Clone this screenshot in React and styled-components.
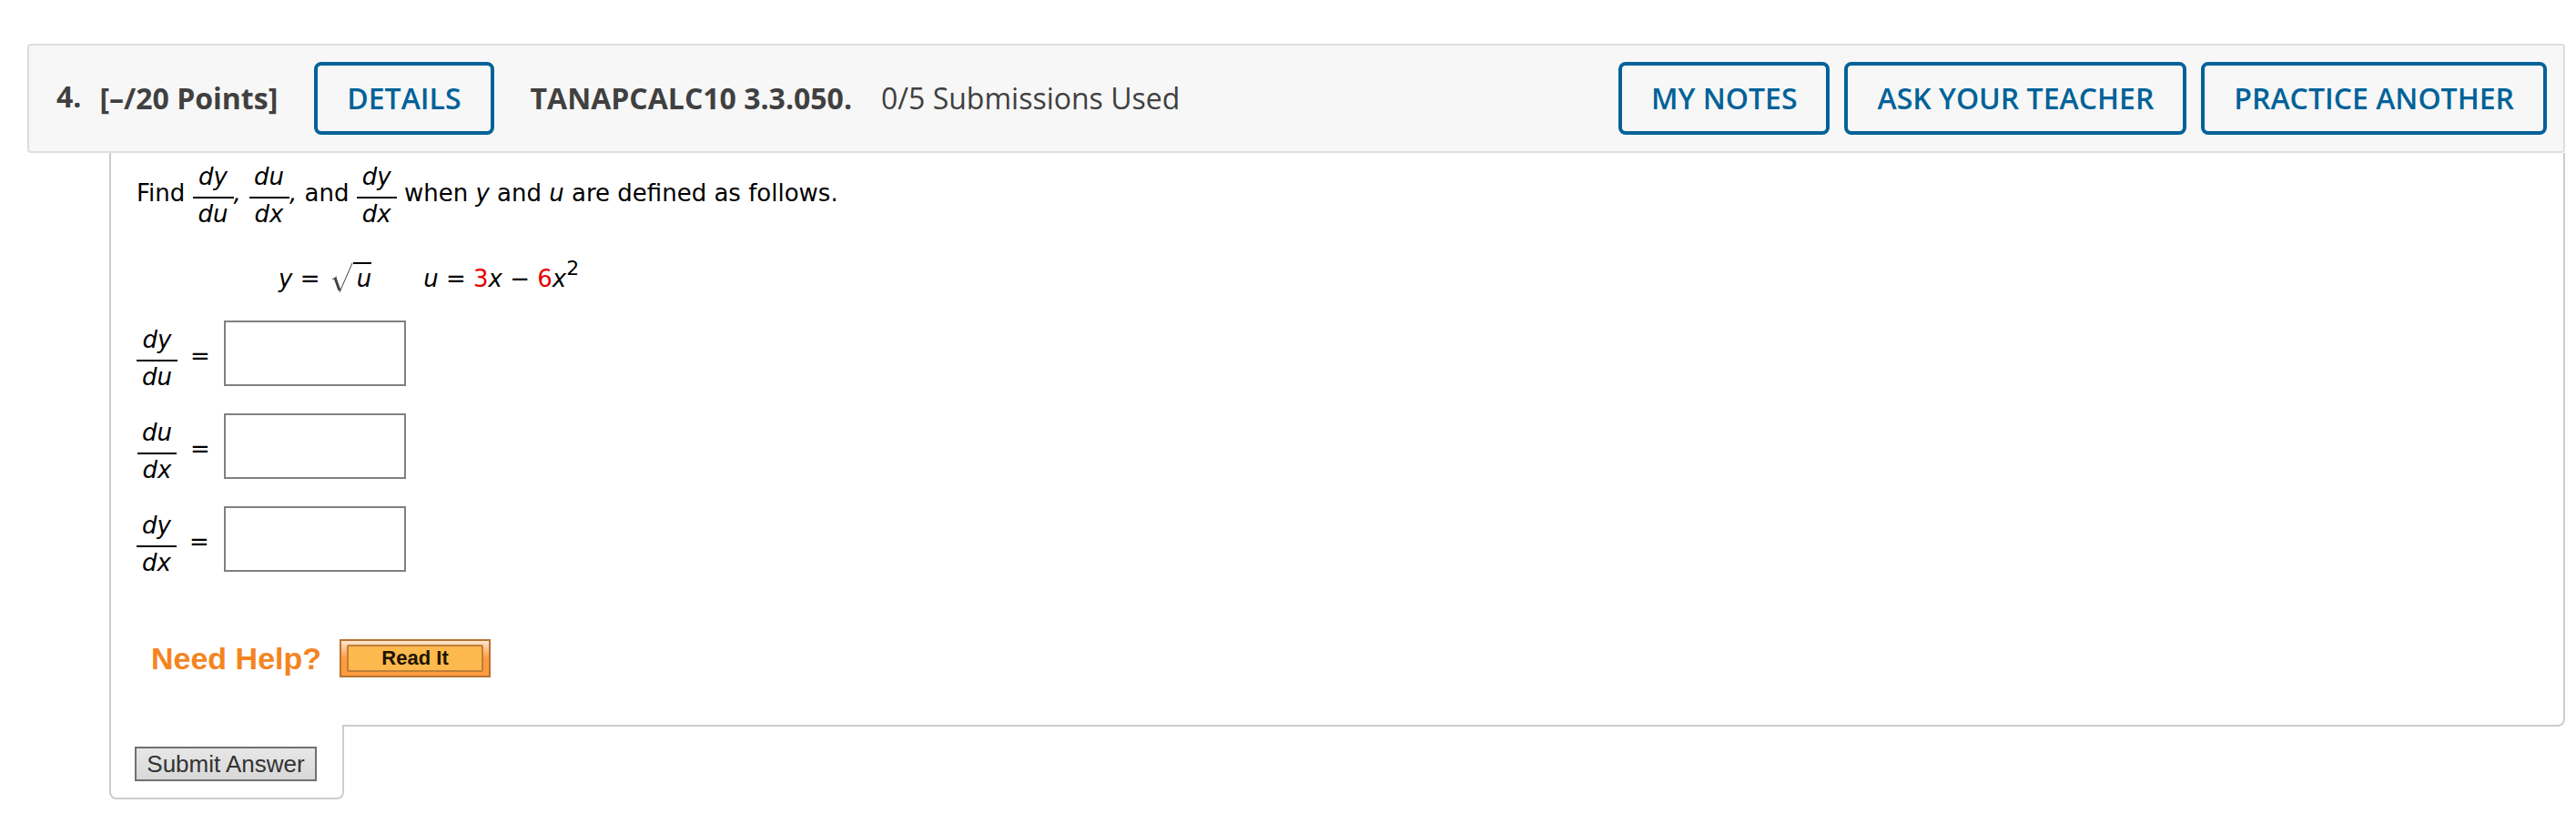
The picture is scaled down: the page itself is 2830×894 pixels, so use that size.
import styled, { createGlobalStyle } from "styled-components";

const GlobalStyle = createGlobalStyle`
    body {
        margin: 0;
        background-color: #fff;
        color: #000;
        font-family: Verdana, "DejaVu Sans", sans-serif;
        font-size: 26px;
        line-height: 30px;
    }
    * {
        box-sizing: border-box;
    }
`;

const Page = styled.main`
    padding: 48px 12px 16px 30px;
`;

const Header = styled.header`
    display: flex;
    align-items: center;
    min-height: 120px;
    padding: 18px 18px 18px 30px;
    background-color: #f7f7f7;
    border: 2px solid #dedede;
    border-radius: 4px;
    color: #404040;
    font-family: "Open Sans", sans-serif;
    font-size: 32px;
    line-height: 44px;
    white-space: nowrap;
`;

const Number = styled.h2`
    margin: 0 20px 4px 0;
    font-size: 32px;
    font-weight: 700;
`;

const Strong = styled.strong`
    margin-right: ${props => props.$gap}px;
    font-weight: 700;
`;

const HeaderButton = styled.button`
    height: 80px;
    padding: 0 32px 2px;
    background-color: transparent;
    border: 4px solid #006298;
    border-radius: 8px;
    color: #006298;
    font-family: inherit;
    font-size: 32px;
    font-weight: 600;
    cursor: pointer;
`;

const DetailsButton = styled(HeaderButton)`
    margin-right: 40px;
`;

const Actions = styled.div`
    display: flex;
    gap: 16px;
    margin-left: auto;
`;

const Body = styled.div`
    margin-left: 90px;
`;

const Question = styled.section`
    padding: 11px 28px 52px;
    border: solid #ccc;
    border-width: 0 2px 2px 2px;
    border-bottom-right-radius: 8px;
`;

// covers the bottom border of the question, so both read as one outline
const SubmitTab = styled.div`
    width: 258px;
    margin-top: -2px;
    padding: 24px 26px 18px;
    background-color: #fff;
    border: solid #ccc;
    border-width: 0 2px 2px 2px;
    border-radius: 0 0 8px 8px;
`;

const Statement = styled.p`
    margin: 0;
`;

const FractionBox = styled.span`
    display: inline-flex;
    flex-direction: column;
    align-items: center;
    vertical-align: 18px;
    font-style: italic;
`;

const FractionPart = styled.span`
    padding: 0 6px 7px;
    & + & {
        padding: 2px 6px 0;
        border-top: 2px solid #000;
    }
`;

const Formula = styled.div`
    margin: 36px 0 26px;
    padding-left: 156px;
    line-height: 40px;
`;

const Equation = styled.span`
    margin-right: 57px;
`;

const RootSign = styled.svg`
    width: 24px;
    height: 34px;
    margin-left: 4px;
    vertical-align: -7px;
`;

const Radicand = styled.i`
    display: inline-block;
    padding-left: 4px;
    border-top: 2px solid #000;
    line-height: 32px;
`;

const Red = styled.span`
    color: #e60000;
`;

const Sup = styled.sup`
    font-size: 22px;
    line-height: 0;
    vertical-align: 13px;
`;

const Answers = styled.div`
    display: flex;
    flex-direction: column;
    gap: 30px;
`;

const AnswerRow = styled.label`
    display: flex;
    align-items: flex-start;
    height: 72px;
`;

const AnswerName = styled.span`
    width: 96px;
    padding-top: 6px;
`;

const Equals = styled.span`
    margin-left: 14px;
`;

const AnswerInput = styled.input`
    width: 200px;
    height: 72px;
    padding: 4px 8px;
    border: 2px solid #808080;
    font: inherit;
`;

const Help = styled.div`
    display: flex;
    align-items: center;
    gap: 20px;
    margin-top: 74px;
    padding-left: 16px;
    font-family: "Liberation Sans", Arial, sans-serif;
`;

const HelpTitle = styled.strong`
    color: #f5841f;
    font-size: 34px;
    line-height: 42px;
`;

const ReadButton = styled.button`
    width: 166px;
    height: 42px;
    padding: 4px 6px;
    background: linear-gradient(#fee6d2, #ff9b3f 50%);
    border: 2px solid #b87333;
    cursor: pointer;
`;

const ReadLabel = styled.span`
    display: block;
    background-color: #fdb94e;
    border: 2px solid #bd8038;
    border-radius: 2px;
    color: #201400;
    font: bold 22px/26px "Liberation Sans", Arial, sans-serif;
`;

const SubmitButton = styled.button`
    display: block;
    width: 200px;
    height: 38px;
    padding: 0;
    background: linear-gradient(#e7e7e7, #d8d8d8);
    border: 2px solid #707070;
    color: #333;
    font: 26px/34px "Liberation Sans", Arial, sans-serif;
    cursor: pointer;
`;

function Fraction({ top, bottom }) {
    return (
        <FractionBox>
            <FractionPart>{top}</FractionPart>
            <FractionPart>{bottom}</FractionPart>
        </FractionBox>
    );
}

const answers = [
    { top: "dy", bottom: "du" },
    { top: "du", bottom: "dx" },
    { top: "dy", bottom: "dx" },
];

export default function App() {
    return (
    <>
    <GlobalStyle />
    <Page>
        <Header>
            <Number>4.</Number>
            <Strong $gap={40}>[–/20 Points]</Strong>
            <DetailsButton>DETAILS</DetailsButton>
            <Strong $gap={32}>TANAPCALC10 3.3.050.</Strong>
            <span>0/5 Submissions Used</span>
            <Actions>
                <HeaderButton>MY NOTES</HeaderButton>
                <HeaderButton>ASK YOUR TEACHER</HeaderButton>
                <HeaderButton>PRACTICE ANOTHER</HeaderButton>
            </Actions>
        </Header>
        <Body>
            <Question>
                <Statement>
                    Find <Fraction top="dy" bottom="du" /><i>,</i>{" "}
                    <Fraction top="du" bottom="dx" /><i>,</i> and{" "}
                    <Fraction top="dy" bottom="dx" /> when <i>y</i> and <i>u</i> are defined as follows.
                </Statement>
                <Formula>
                    <Equation>
                        <i>y</i> ={" "}
                        <RootSign viewBox="0 0 24 34" fill="none" stroke="#444">
                            <path d="M1 19l5-3" strokeWidth="1" />
                            <path d="M4 17l5 14" strokeWidth="3" />
                            <path d="M9 33L23 1" strokeWidth="1" />
                        </RootSign>
                        <Radicand>u</Radicand>
                    </Equation>
                    <span>
                        <i>u</i> = <Red>3</Red><i>x</i> − <Red>6</Red><i>x</i><Sup>2</Sup>
                    </span>
                </Formula>
                <Answers>
                    {answers.map((answer, i) => (
                        <AnswerRow key={i}>
                            <AnswerName>
                                <Fraction top={answer.top} bottom={answer.bottom} />
                                <Equals>=</Equals>
                            </AnswerName>
                            <AnswerInput type="text" />
                        </AnswerRow>
                    ))}
                </Answers>
                <Help>
                    <HelpTitle>Need Help?</HelpTitle>
                    <ReadButton><ReadLabel>Read It</ReadLabel></ReadButton>
                </Help>
            </Question>
            <SubmitTab>
                <SubmitButton>Submit Answer</SubmitButton>
            </SubmitTab>
        </Body>
    </Page>
    </>
    );
}
